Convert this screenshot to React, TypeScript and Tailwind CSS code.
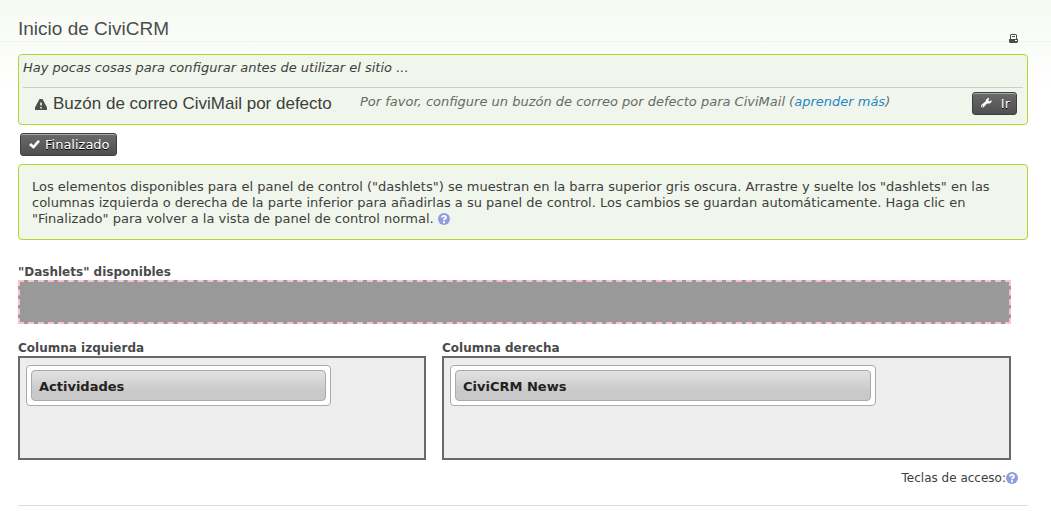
import React from "react";

function WarningIcon() {
  return (
    <svg viewBox="0 0 12 11" className="h-[11px] w-3 shrink-0" aria-hidden="true">
      <path fill="#4d4d4d" fillRule="evenodd" d="M4.500 0h3L12 8.500V11H0V8.500zM5.200 3.500v3h1.600v-3zM5.200 8v1.500h1.600V8z" />
    </svg>
  );
}

function CheckIcon() {
  return (
    <svg viewBox="0 0 11 9" className="h-[9px] w-[11px]" aria-hidden="true">
      <path fill="#fff" d="M0 5l2-2 2.300 2.200L9 0l2 1.600L5 8.500H4z" />
    </svg>
  );
}

function WrenchIcon() {
  return (
    <svg viewBox="0 0 11 11" className="h-[11px] w-[11px]" aria-hidden="true">
      <path
        fill="#fff"
        fillRule="evenodd"
        d="M8.500 0L7.500 1.500V3l1 .5L10.500 2V4L8.800 5.500H6L3 8.700Q1.500 10 .5 9T.8 6.600L4.800 3.300V2L6.800 0zM1 7.500v1h1v-1z"
      />
    </svg>
  );
}

function PrinterIcon() {
  return (
    <svg viewBox="0 0 9 9" className="h-[9px] w-[9px]" aria-hidden="true">
      <path
        fill="#4d4d4d"
        fillRule="evenodd"
        d="M2 0h5l1 1v4h1v3L8 9H1L0 8V5h1V1zM2 1v4h5V1zM3 2h3v1H3zM6 6v1h2V6z"
      />
    </svg>
  );
}

function HelpLink({ label }: { label: string }) {
  return (
    <a href="#ayuda" aria-label={label} className="inline-block align-[-2px]">
      <svg viewBox="0 0 12 12" className="block h-3 w-3" aria-hidden="true">
        <circle cx="6" cy="6" r="6" fill="#8f9cdf" />
        <path d="M4 4.500C4 2.300 8 2.300 8 4.500C8 5.800 6 5.500 6 7.300" fill="none" stroke="#fff" strokeWidth="1.800" />
        <path d="M5 8.300h2v2H5z" fill="#fff" />
      </svg>
    </a>
  );
}

function DarkButton({ icon, children }: { icon: React.ReactNode; children: React.ReactNode }) {
  return (
    <button
      type="button"
      className="flex h-[23px] min-w-[45px] items-center justify-between gap-[5px] rounded-[3px] border border-[#3e3e3e] bg-linear-to-b from-[#6b6b6b] to-[#4f4f4f] pr-1.5 pl-2 text-[13px] leading-4 text-white shadow-[inset_0_1px_0_#aaa] [text-shadow:0_1px_0_#000]"
    >
      {icon}
      <span>{children}</span>
    </button>
  );
}

function DashletColumn({ title, dashlet }: { title: string; dashlet: string }) {
  return (
    <section>
      <h2 className="text-xs leading-4 font-bold text-[#4a4a4a]">{title}</h2>
      <div className="h-[104px] border-2 border-[#696969] bg-[#eee]">
        <div className="mt-[7px] ml-1.5 box-content flow-root w-3/4 rounded-[4px] border border-[#aaa] bg-white">
          <h3 className="m-1 rounded-[4px] border border-[#aaa] bg-linear-to-b from-[#e2e2e2] to-[#c9c9c9] to-70% px-[7px] pt-2 pb-[5px] leading-4 font-bold text-[#222]">
            {dashlet}
          </h3>
        </div>
      </div>
    </section>
  );
}

const panel = "rounded-[4px] border border-[#b0d730] bg-[#f0f6eb]";

export default function App() {
  return (
    <div className="bg-white bg-linear-to-b from-[#f6faf2] to-white to-[92px] font-[Verdana,'DejaVu_Sans',sans-serif] text-[13px] leading-4 text-[#3e3e3e]">
      <header className="flex h-[42px] items-end justify-between border-b border-[#f0f3ee] pr-[33px] pl-[18px]">
        <h1 className="font-['Liberation_Sans',Arial,sans-serif] text-[19px] leading-6 text-[#4d4d4d]">
          Inicio de CiviCRM
        </h1>
        <button type="button" aria-label="Imprimir" className="-mb-0.5">
          <PrinterIcon />
        </button>
      </header>

      <main className="mr-[23px] ml-[18px] pt-3">
        <section className={`${panel} px-1 pt-[5px] pb-1`}>
          <p className="pb-[11px] italic">Hay pocas cosas para configurar antes de utilizar el sitio ...</p>
          <div className="flex items-start border-t border-[#ccc] pt-1 pr-1.5 pb-1 pl-3">
            <div className="flex w-[325px] shrink-0 items-center gap-1.5">
              <WarningIcon />
              <h2 className="font-['Liberation_Sans',Arial,sans-serif] text-[17px] leading-6">
                Buzón de correo CiviMail por defecto
              </h2>
            </div>
            <p className="flex-1 pt-0.5 text-[#696969] italic">
              Por favor, configure un buzón de correo por defecto para CiviMail (
              <a href="#aprender" className="text-[#2786c2]">
                aprender más
              </a>
              )
            </p>
            <DarkButton icon={<WrenchIcon />}>Ir</DarkButton>
          </div>
        </section>

        <div className="flex px-0.5 py-2">
          <DarkButton icon={<CheckIcon />}>Finalizado</DarkButton>
        </div>

        <p className={`${panel} px-[13px] pt-[14px] pb-3`}>
          Los elementos disponibles para el panel de control ("dashlets") se muestran en la barra superior gris oscura.
          Arrastre y suelte los "dashlets" en las columnas izquierda o derecha de la parte inferior para añadirlas a su
          panel de control. Los cambios se guardan automáticamente. Haga clic en "Finalizado" para volver a la vista de
          panel de control normal. <HelpLink label="Ayuda sobre dashlets" />
        </p>

        <div className="mr-[17px] pt-6">
          <h2 className="text-xs leading-4 font-bold text-[#4a4a4a]">"Dashlets" disponibles</h2>
          <div className="h-11 border-2 border-dashed border-[#ffc0cb] bg-[#999]" />
          <div className="grid grid-cols-[408fr_569fr] gap-4 pt-4">
            <DashletColumn title="Columna izquierda" dashlet="Actividades" />
            <DashletColumn title="Columna derecha" dashlet="CiviCRM News" />
          </div>
        </div>

        <footer className="border-b border-[#ddd] pt-2.5 pr-2.5 pb-[19px] text-right text-xs leading-4">
          Teclas de acceso:
          <HelpLink label="Teclas de acceso" />
        </footer>
      </main>
    </div>
  );
}
